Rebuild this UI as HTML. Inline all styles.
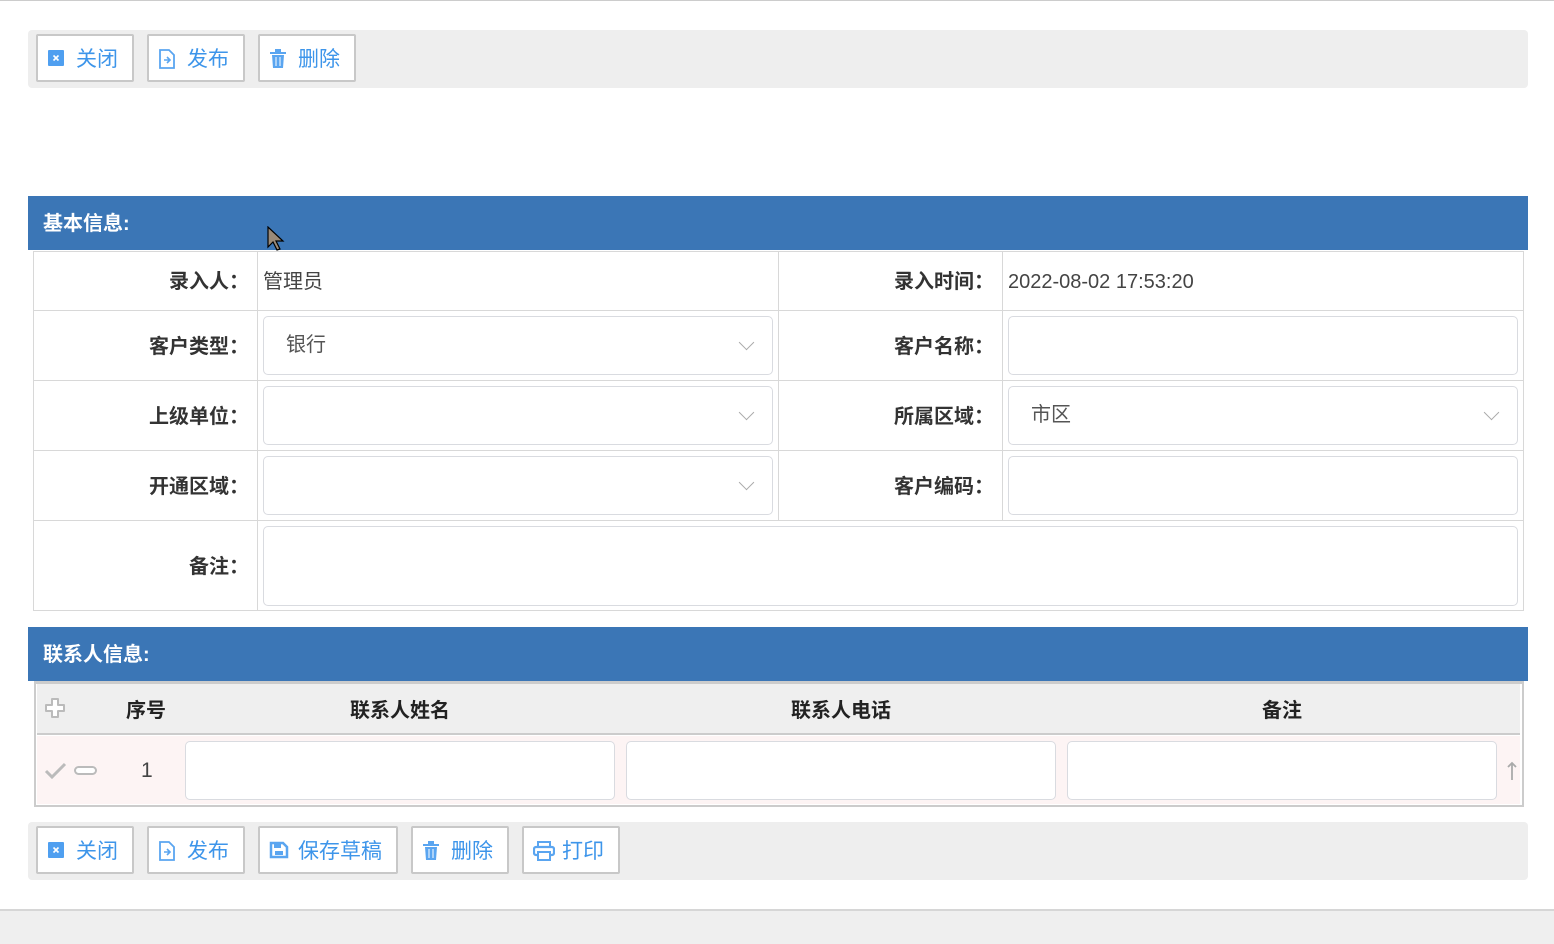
<!DOCTYPE html>
<html><head><meta charset="utf-8"><style>
*{box-sizing:border-box;margin:0;padding:0}
body{width:1554px;height:944px;position:relative;background:#fff;font-family:"Liberation Sans","Noto Sans CJK SC",sans-serif;overflow:hidden}
.a{position:absolute}
.tb{position:absolute;left:28px;width:1500px;height:58px;background:#eee;border-radius:4px}
.btn{position:absolute;top:4px;height:48px;background:#fff;border:2px solid #c8c8c8;border-radius:2px;color:#3d95ea;font-size:21px;line-height:47px;padding-left:38px}
.btn svg{position:absolute;left:9px;top:13px}
.hd{position:absolute;left:28px;width:1500px;height:54px;background:#3b76b6;color:#fff;font-weight:bold;font-size:20px;line-height:56px;padding-left:15px}
.cell{position:absolute;border:1px solid #d8d8d8}
.lb{font-weight:bold;color:#333;font-size:20px;text-align:right;padding-right:8px}
.val{font-size:20px;color:#444;padding-left:5px}
.inp{position:absolute;background:#fff;border:1px solid #d9dbe0;border-radius:5px;font-size:20px;color:#555;padding-left:22px}
.arr{position:absolute;right:20px;top:20px;width:11px;height:11px;border-right:1.5px solid #aaa;border-bottom:1.5px solid #aaa;transform:rotate(45deg)}
.th{position:absolute;top:684px;font-weight:bold;font-size:20px;color:#222;line-height:54px;text-align:center}
</style></head><body>
<div class="a" style="left:0;top:0;width:1554px;height:1px;background:#ccc"></div>

<div class="tb" style="top:30px">
 <div class="btn" style="left:8px;width:98px"><svg width="18" height="18"><rect x="1" y="1" width="16" height="16" fill="#4f9ff0" rx="1"/><path d="M6.5 6.5l5 5M11.5 6.5l-5 5" stroke="#fff" stroke-width="1.6"/></svg>关闭</div>
 <div class="btn" style="left:119px;width:98px"><svg width="18" height="20"><path d="M2 1h9l5 5v13H2z" fill="none" stroke="#5aa5f0" stroke-width="1.8"/><path d="M6 11h6M9 8l3 3-3 3" fill="none" stroke="#5aa5f0" stroke-width="1.6"/></svg>发布</div>
 <div class="btn" style="left:230px;width:98px"><svg width="18" height="20"><rect x="1" y="3" width="16" height="2" fill="#5aa5f0"/><rect x="6" y="0" width="6" height="3" fill="#5aa5f0"/><path d="M3 6h12l-1 13H4z" fill="#5aa5f0"/><path d="M7 8v9M11 8v9" stroke="#fff"/></svg>删除</div>
</div>

<div class="hd" style="top:196px">基本信息:</div>
<svg class="a" style="left:266px;top:226px" width="20" height="30"><path d="M2 1v20l5-5 4 8 3-1-4-8h7z" fill="#9a8a78" stroke="#000" stroke-width="1.2"/></svg>

<div class="cell lb" style="left:33px;top:251px;width:225px;height:60px;line-height:61px">录入人：</div>
<div class="cell val" style="left:257px;top:251px;width:522px;height:60px;line-height:61px">管理员</div>
<div class="cell lb" style="left:778px;top:251px;width:225px;height:60px;line-height:61px">录入时间：</div>
<div class="cell val" style="left:1002px;top:251px;width:522px;height:60px;line-height:61px">2022-08-02 17:53:20</div>

<div class="cell lb" style="left:33px;top:310px;width:225px;height:71px;line-height:72px">客户类型：</div>
<div class="cell" style="left:257px;top:310px;width:522px;height:71px"></div>
<div class="cell lb" style="left:778px;top:310px;width:225px;height:71px;line-height:72px">客户名称：</div>
<div class="cell" style="left:1002px;top:310px;width:522px;height:71px"></div>

<div class="cell lb" style="left:33px;top:380px;width:225px;height:71px;line-height:72px">上级单位：</div>
<div class="cell" style="left:257px;top:380px;width:522px;height:71px"></div>
<div class="cell lb" style="left:778px;top:380px;width:225px;height:71px;line-height:72px">所属区域：</div>
<div class="cell" style="left:1002px;top:380px;width:522px;height:71px"></div>

<div class="cell lb" style="left:33px;top:450px;width:225px;height:71px;line-height:72px">开通区域：</div>
<div class="cell" style="left:257px;top:450px;width:522px;height:71px"></div>
<div class="cell lb" style="left:778px;top:450px;width:225px;height:71px;line-height:72px">客户编码：</div>
<div class="cell" style="left:1002px;top:450px;width:522px;height:71px"></div>

<div class="cell lb" style="left:33px;top:520px;width:225px;height:91px;line-height:92px">备注：</div>
<div class="cell" style="left:257px;top:520px;width:1267px;height:91px"></div>

<div class="inp" style="left:263px;top:316px;width:510px;height:59px;line-height:57px">银行<div class="arr"></div></div>
<div class="inp" style="left:1008px;top:316px;width:510px;height:59px"></div>
<div class="inp" style="left:263px;top:386px;width:510px;height:59px"><div class="arr"></div></div>
<div class="inp" style="left:1008px;top:386px;width:510px;height:59px;line-height:57px">市区<div class="arr"></div></div>
<div class="inp" style="left:263px;top:456px;width:510px;height:59px"><div class="arr"></div></div>
<div class="inp" style="left:1008px;top:456px;width:510px;height:59px"></div>
<div class="inp" style="left:263px;top:526px;width:1255px;height:80px"></div>

<div class="hd" style="top:627px">联系人信息:</div>

<div class="a" style="left:34px;top:681px;width:1490px;height:126px;border:2px solid #ccc;border-top:3px solid #ccc;background:#fff"></div>
<div class="a" style="left:37px;top:684px;width:1483px;height:51px;background:#efefef;border-bottom:2px solid #ccc"></div>
<div class="a" style="left:37px;top:736px;width:1483px;height:68px;background:#fdf4f4"></div>
<svg class="a" style="left:44px;top:697px" width="24" height="24"><path d="M8 2h6v6h6v6h-6v6H8v-6H2V8h6z" fill="#fff" stroke="#bbb" stroke-width="2" stroke-linejoin="round"/></svg>
<div class="th" style="left:100px;width:92px">序号</div>
<div class="th" style="left:185px;width:430px">联系人姓名</div>
<div class="th" style="left:626px;width:430px">联系人电话</div>
<div class="th" style="left:1067px;width:430px">备注</div>
<svg class="a" style="left:44px;top:760px" width="58" height="22"><path d="M2 11l6 6L21 4" fill="none" stroke="#bbb" stroke-width="3"/><rect x="31" y="7" width="21" height="7" rx="3.5" fill="#fff" stroke="#bbb" stroke-width="2"/></svg>
<div class="a" style="left:141px;top:759px;font-size:21px;color:#444">1</div>
<div class="inp" style="left:185px;top:741px;width:430px;height:59px"></div>
<div class="inp" style="left:626px;top:741px;width:430px;height:59px"></div>
<div class="inp" style="left:1067px;top:741px;width:430px;height:59px"></div>
<svg class="a" style="left:1507px;top:761px" width="10" height="20"><path d="M5 19V2M1 6l4-4 4 4" fill="none" stroke="#aaa" stroke-width="1.8"/></svg>

<div class="tb" style="top:822px">
 <div class="btn" style="left:8px;width:98px"><svg width="18" height="18"><rect x="1" y="1" width="16" height="16" fill="#4f9ff0" rx="1"/><path d="M6.5 6.5l5 5M11.5 6.5l-5 5" stroke="#fff" stroke-width="1.6"/></svg>关闭</div>
 <div class="btn" style="left:119px;width:98px"><svg width="18" height="20"><path d="M2 1h9l5 5v13H2z" fill="none" stroke="#5aa5f0" stroke-width="1.8"/><path d="M6 11h6M9 8l3 3-3 3" fill="none" stroke="#5aa5f0" stroke-width="1.6"/></svg>发布</div>
 <div class="btn" style="left:230px;width:140px"><svg width="20" height="18"><path d="M2 2h12l4 4v10H2z" fill="none" stroke="#5aa5f0" stroke-width="2.5"/><rect x="5" y="2" width="7" height="5" fill="#5aa5f0"/><rect x="6" y="10" width="8" height="4" fill="#5aa5f0"/></svg>保存草稿</div>
 <div class="btn" style="left:383px;width:98px"><svg width="18" height="20"><rect x="1" y="3" width="16" height="2" fill="#5aa5f0"/><rect x="6" y="0" width="6" height="3" fill="#5aa5f0"/><path d="M3 6h12l-1 13H4z" fill="#5aa5f0"/><path d="M7 8v9M11 8v9" stroke="#fff"/></svg>删除</div>
 <div class="btn" style="left:494px;width:98px"><svg width="22" height="20"><rect x="5" y="1" width="12" height="5" fill="none" stroke="#5aa5f0" stroke-width="2"/><rect x="1" y="6" width="20" height="8" rx="2" fill="none" stroke="#5aa5f0" stroke-width="2.2"/><rect x="5" y="11" width="12" height="8" fill="#fff" stroke="#5aa5f0" stroke-width="2"/></svg>打印</div>
</div>

<div class="a" style="left:0;top:909px;width:1554px;height:35px;background:#efefef;border-top:2px solid #d6d6d6"></div>
</body></html>
